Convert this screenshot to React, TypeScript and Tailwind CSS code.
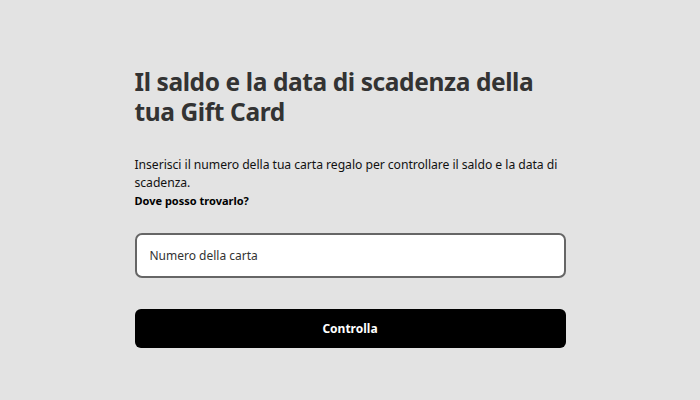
export default function App() {
  return (
    <div className="flex min-h-[400px] w-full justify-center bg-[#e3e3e3] font-['Noto_Sans',sans-serif] text-[#333]">
      <div className="w-[431px] pt-[67px]">
        <h1 className="text-[24.5px] font-bold leading-[30px] tracking-[-0.4px] text-[#333]">
          Il saldo e la data di scadenza della tua Gift Card
        </h1>
        <p className="mt-[29px] text-[12.2px] leading-[18px] tracking-[-0.05px] text-[#111]">
          Inserisci il numero della tua carta regalo per controllare il saldo e la data di scadenza.
        </p>
        <p className="text-[11px] font-bold leading-[17px] text-black">Dove posso trovarlo?</p>
        <div className="mt-[24px] flex h-[45px] items-center rounded-[7px] border-2 border-[#666] bg-white px-[13px] text-[12px] text-[#333]">
          Numero della carta
        </div>
        <button
          type="button"
          className="mt-[31px] flex h-[39px] w-full items-center justify-center rounded-[6px] bg-black text-[12px] font-bold text-white"
        >
          Controlla
        </button>
      </div>
    </div>
  );
}
